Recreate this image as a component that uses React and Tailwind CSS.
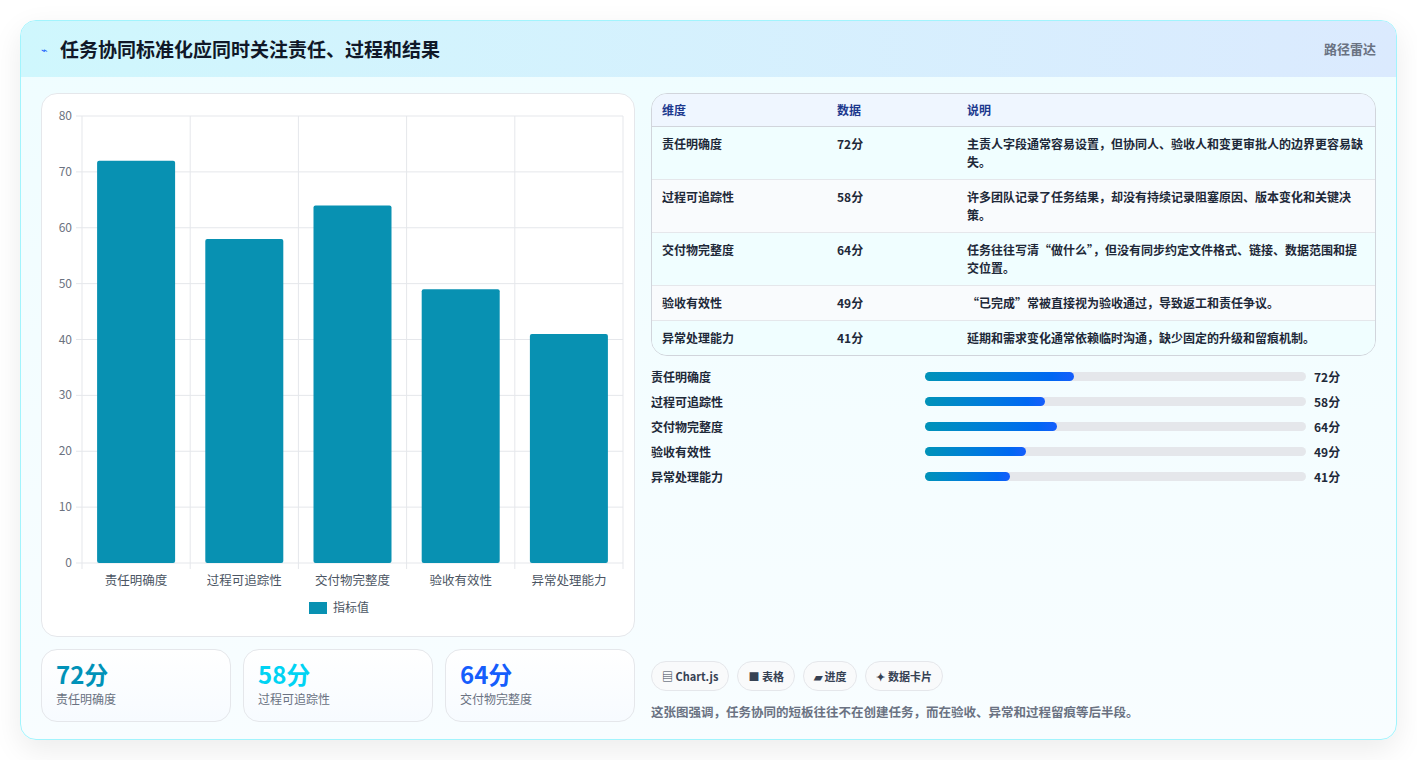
const data = [
  ["责任明确度", 72, "主责人字段通常容易设置，但协同人、验收人和变更审批人的边界更容易缺失。"],
  ["过程可追踪性", 58, "许多团队记录了任务结果，却没有持续记录阻塞原因、版本变化和关键决策。"],
  ["交付物完整度", 64, "任务往往写清“做什么”，但没有同步约定文件格式、链接、数据范围和提交位置。"],
  ["验收有效性", 49, "“已完成”常被直接视为验收通过，导致返工和责任争议。"],
  ["异常处理能力", 41, "延期和需求变化通常依赖临时沟通，缺少固定的升级和留痕机制。"],
];

const font = { fontFamily: '"Noto Sans CJK SC", "Noto Sans", sans-serif' };

function Chart() {
  const x0 = 40, y0 = 22, w = 541, h = 447;
  return (
    <svg width="594" height="543" className="block">
      {[0, 10, 20, 30, 40, 50, 60, 70, 80].map((v) => {
        const y = y0 + h - (v / 80) * h;
        return (
          <g key={v}>
            <line x1={x0 - 6} x2={x0 + w} y1={y} y2={y} stroke="#e5e7eb" />
            <text x={x0 - 10} y={y + 4} textAnchor="end" fontSize="12" fill="#6b7280">{v}</text>
          </g>
        );
      })}
      {[0, 1, 2, 3, 4, 5].map((i) => (
        <line key={i} x1={x0 + i * 108.2} x2={x0 + i * 108.2} y1={y0} y2={y0 + h + 6} stroke="#e5e7eb" />
      ))}
      {data.map(([n, v], i) => {
        const bh = (v / 80) * h;
        const cx = x0 + i * 108.2 + 54.1;
        return (
          <g key={n}>
            <rect x={cx - 39} y={y0 + h - bh} width="78" height={bh} rx="2" fill="#0891b2" />
            <text x={cx} y={y0 + h + 22} textAnchor="middle" fontSize="12.5" fill="#4b5563">{n}</text>
          </g>
        );
      })}
      <rect x="267" y="508" width="18" height="12" fill="#0891b2" />
      <text x="291" y="518" fontSize="12" fill="#4b5563">指标值</text>
    </svg>
  );
}

export default function App() {
  return (
    <div className="min-h-screen bg-white p-5" style={font}>
      <div className="h-[720px] overflow-hidden rounded-2xl border border-cyan-200 shadow-[0_10px_30px_rgba(0,0,0,0.08)] bg-gradient-to-b from-[#effdff] to-[#f8fdff]">
        <div className="flex h-[56px] items-center justify-between bg-gradient-to-r from-[#cff7fd] to-[#dbeafe] px-5">
          <div className="flex items-center gap-3">
            <span className="text-[11px] text-blue-600">⌁</span>
            <span className="text-[19px] font-bold text-gray-900">任务协同标准化应同时关注责任、过程和结果</span>
          </div>
          <span className="text-[13px] font-semibold text-gray-500">路径雷达</span>
        </div>
        <div className="flex gap-4 px-5 pt-4">
          <div className="w-[594px] shrink-0">
            <div className="h-[544px] rounded-2xl border border-gray-200 bg-white">
              <Chart />
            </div>
            <div className="mt-3 grid grid-cols-3 gap-3">
              {[["72分", "text-cyan-600", "责任明确度"], ["58分", "text-cyan-400", "过程可追踪性"], ["64分", "text-blue-600", "交付物完整度"]].map(([v, c, l]) => (
                <div key={l} className="h-[73px] rounded-2xl border border-gray-200 bg-gradient-to-b from-white to-[#f7fbff] px-3.5 pt-2">
                  <div className={`text-[24px] font-bold leading-8 ${c}`}>{v}</div>
                  <div className="text-[12px] text-gray-500">{l}</div>
                </div>
              ))}
            </div>
          </div>
          <div className="flex flex-1 flex-col">
            <div className="overflow-hidden rounded-2xl border border-gray-300">
              <div className="flex h-[33px] items-center border-b border-gray-300 bg-[#eff6ff] px-2.5 text-[12px] font-semibold text-blue-900">
                <div className="w-[175px]">维度</div>
                <div className="w-[130px]">数据</div>
                <div>说明</div>
              </div>
              {data.map(([n, v, d], i) => (
                <div key={n} className={`flex border-b border-gray-200 px-2.5 py-2 text-[12px] font-semibold leading-[18px] text-gray-800 last:border-b-0 ${i % 2 ? "bg-[#f9fbfd]" : "bg-[#f0feff]"}`}>
                  <div className="w-[175px] shrink-0">{n}</div>
                  <div className="w-[130px] shrink-0">{v}分</div>
                  <div className="flex-1">{d}</div>
                </div>
              ))}
            </div>
            <div className="mt-2 flex flex-col">
              {data.map(([n, v]) => (
                <div key={n} className="flex h-[25px] items-center text-[12px] font-semibold text-gray-800">
                  <div className="w-[274px]">{n}</div>
                  <div className="h-[9px] w-[381px] rounded-full bg-gray-200">
                    <div className="h-full rounded-full bg-gradient-to-r from-cyan-600 to-blue-600" style={{ width: `${v * 0.543}%` }} />
                  </div>
                  <div className="ml-2">{v}分</div>
                </div>
              ))}
            </div>
            <div className="mt-auto pb-0">
              <div className="flex gap-2">
                {["▤ Chart.js", "■ 表格", "▰ 进度", "✦ 数据卡片"].map((t) => (
                  <span key={t} className="rounded-full border border-gray-200 bg-gray-50 px-2.5 py-1.5 text-[11px] font-semibold text-gray-700">{t}</span>
                ))}
              </div>
              <div className="mt-3 text-[12.5px] font-semibold text-gray-500">这张图强调，任务协同的短板往往不在创建任务，而在验收、异常和过程留痕等后半段。</div>
            </div>
          </div>
        </div>
      </div>
    </div>
  );
}
